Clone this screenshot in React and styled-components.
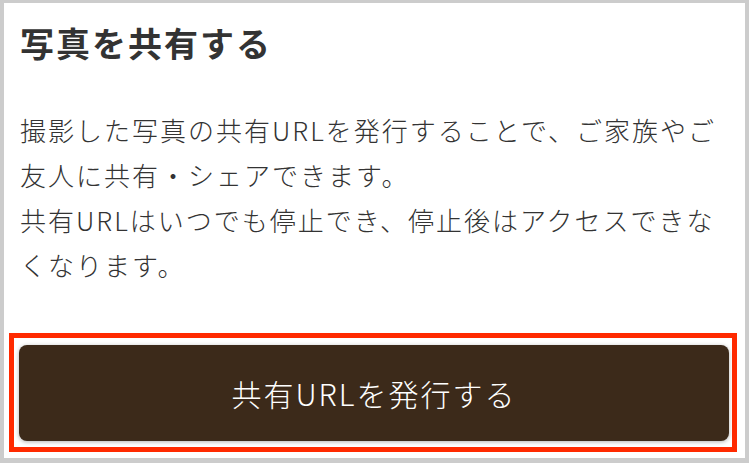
import styled, { createGlobalStyle } from 'styled-components';

const GlobalStyle = createGlobalStyle`
  html, body {
    margin: 0;
    padding: 0;
    background: #cccccc;
  }
  * {
    box-sizing: border-box;
  }
`;

const Frame = styled.div`
  width: 749px;
  height: 463px;
  padding: 3px 4px 5px 4px;
  background: #cccccc;
`;

const Panel = styled.section`
  height: 100%;
  background: #ffffff;
  display: flex;
  flex-direction: column;
  font-family: 'Noto Sans CJK JP', 'Noto Sans', sans-serif;
  color: #333333;
`;

const Title = styled.h2`
  margin: 0;
  padding: 17px 0 0 16px;
  font-size: 34px;
  line-height: 46px;
  font-weight: 700;
  letter-spacing: 2px;
`;

const Description = styled.p`
  margin: 41px 0 0;
  padding: 0 12px 0 16px;
  font-size: 26px;
  line-height: 45px;
  letter-spacing: 2px;
  font-weight: 300;
  color: #333333;
`;

const Highlight = styled.div`
  margin: auto 8px 6px 5px;
  border: 5px solid #ff2a00;
  padding: 7px 3px 6px 5px;
`;

const ShareButton = styled.button`
  display: flex;
  align-items: center;
  justify-content: center;
  width: 100%;
  height: 96px;
  border: none;
  border-radius: 8px;
  background: #3c2a1a;
  box-shadow: 0 1px 4px rgba(0, 0, 0, 0.3);
  color: #ffffff;
  font-family: 'Noto Sans CJK JP', 'Noto Sans', sans-serif;
  font-size: 30px;
  letter-spacing: 2px;
  font-weight: 300;
  cursor: pointer;
`;

const App = () => (
  <>
    <GlobalStyle />
    <Frame>
      <Panel>
        <Title>写真を共有する</Title>
        <Description>
          撮影した写真の共有URLを発行することで、ご家族やご友人に共有・シェアできます。
          <br />
          共有URLはいつでも停止でき、停止後はアクセスできなくなります。
        </Description>
        <Highlight>
          <ShareButton type="button">共有URLを発行する</ShareButton>
        </Highlight>
      </Panel>
    </Frame>
  </>
);

export default App;
